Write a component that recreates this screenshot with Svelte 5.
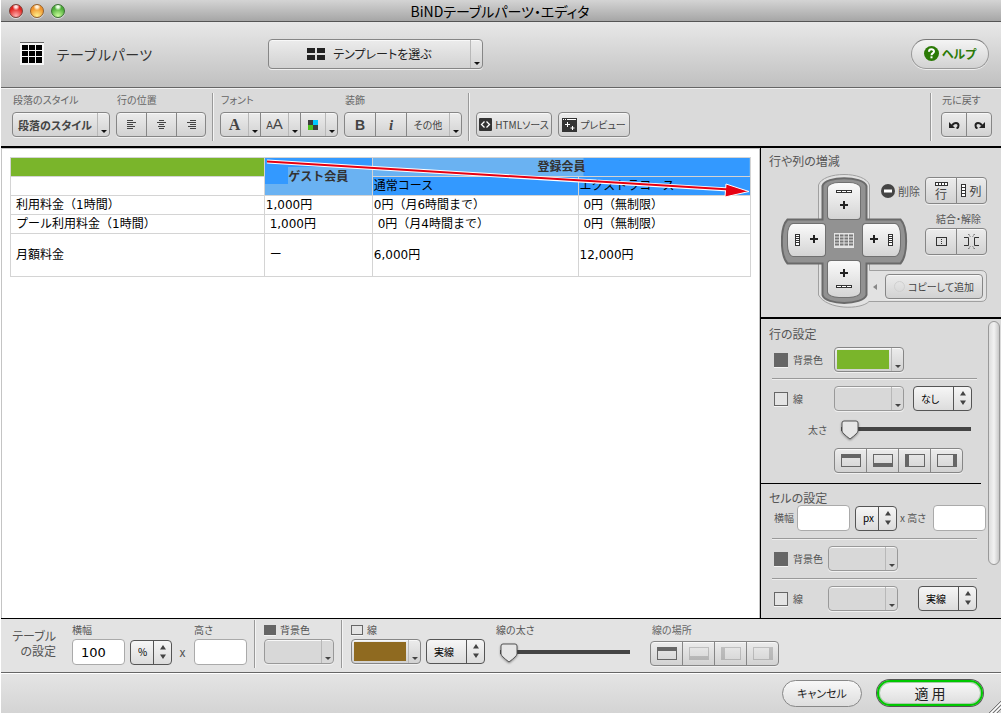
<script>
  let rowBg = $state(true);
  let rowLine = $state(false);
  let cellBg = $state(true);
  let cellLine = $state(false);
  let tableBg = $state(true);
  let tableLine = $state(false);
  let tableWidth = $state('100');
  let tableHeight = $state('');
  let cellWidth = $state('');
  let cellHeight = $state('');
  let rowThickness = $state(0);
  let tableThickness = $state(0);

  const edges = [
    { name: '上', x: 0, y: 0, w: 20, h: 4 },
    { name: '下', x: 0, y: 9, w: 20, h: 4 },
    { name: '左', x: 0, y: 0, w: 4, h: 13 },
    { name: '右', x: 16, y: 0, w: 4, h: 13 }
  ];
</script>

{#snippet swatch(label, color)}
  <button class="btn swatch" class:empty={!color} aria-label={label}>
    <span class="chip" style:background={color}></span><span class="drop"></span>
  </button>
{/snippet}

{#snippet picker(label, options, wide)}
  <span class="picker" class:wide>
    <select aria-label={label}>
      {#each options as o}<option>{o}</option>{/each}
    </select>
    <svg width="6" height="14" viewBox="0 0 6 14"><path d="M3 0L6 4.500H0zM3 14L0 9.500H6z" fill="#444" /></svg>
  </span>
{/snippet}

{#snippet edgeGroup(dimmed)}
  <div class="seg edges">
    {#each edges as e, i}
      <button class="btn" class:dim={dimmed && i > 0} aria-label={e.name}>
        <svg width="20" height="13" viewBox="0 0 20 13" fill="#666">
          <rect x="0.5" y="0.5" width="19" height="12" fill="none" stroke="#666" />
          <rect x={e.x} y={e.y} width={e.w} height={e.h} />
        </svg>
      </button>
    {/each}
  </div>
{/snippet}

<div class="window">
  <header class="titlebar">
    <div class="lights">
      <button class="light red" aria-label="閉じる"></button>
      <button class="light amber" aria-label="しまう"></button>
      <button class="light green" aria-label="拡大"></button>
    </div>
    <h1>BiNDテーブルパーツ・エディタ</h1>
  </header>

  <div class="banner">
    <div class="brand">
      <svg width="24" height="23" viewBox="0 0 24 23">
        <rect width="24" height="23" fill="#f6f6f6" />
        <path d="M0 .5H24" stroke="#666" />
        <path fill="#000" d="M2 3h6v5H2zM9 3h6v5H9zM16 3h6v5h-6zM2 9h6v5H2zM9 9h6v5H9zM16 9h6v5h-6zM2 15h6v6H2zM9 15h6v6H9zM16 15h6v6h-6z" />
      </svg>
      <span>テーブルパーツ</span>
    </div>
    <button class="btn template">
      <span class="face">
        <svg width="18" height="12" viewBox="0 0 18 12"><path fill="#222" d="M0 0h8v5H0zM10 0h8v5h-8zM0 7h8v5H0zM10 7h8v5h-8z" /></svg>
        テンプレートを選ぶ
      </span>
      <span class="drop"></span>
    </button>
    <button class="help">
      <svg width="15" height="15" viewBox="0 0 15 15">
        <circle cx="7.500" cy="7.500" r="7.500" fill="#2b7a06" />
        <path d="M5 5.700C5 2.500 10 2.600 10 5.500C10 7.200 7.500 7 7.500 9.200" fill="none" stroke="#fff" stroke-width="2" />
        <rect x="6.500" y="10.300" width="2" height="2" fill="#fff" />
      </svg>
      ヘルプ
    </button>
  </div>

  <div class="toolbar">
    <div class="group">
      <span class="cap">段落のスタイル</span>
      <button class="btn para"><span class="face">段落のスタイル</span><span class="drop"></span></button>
    </div>
    <div class="group">
      <span class="cap">行の位置</span>
      <div class="seg align">
        <button class="btn" aria-label="左揃え"><svg width="9" height="9" viewBox="0 0 9 9"><path d="M0 .5h6M0 2.500h9M0 4.500h6M0 6.500h8M0 8.500h6" stroke="#444" /></svg></button>
        <button class="btn" aria-label="中央揃え"><svg width="9" height="9" viewBox="0 0 9 9"><path d="M2 .5h5M0 2.500h9M2 4.500h5M1 6.500h7M2 8.500h5" stroke="#444" /></svg></button>
        <button class="btn" aria-label="右揃え"><svg width="9" height="9" viewBox="0 0 9 9"><path d="M3 .5h6M0 2.500h9M3 4.500h6M1 6.500h8M3 8.500h6" stroke="#444" /></svg></button>
      </div>
    </div>
    <span class="rule"></span>
    <div class="group">
      <span class="cap">フォント</span>
      <div class="seg font">
        <button class="btn"><span class="face serif">A</span><span class="drop"></span></button>
        <button class="btn"><span class="face sizes"><small>A</small>A</span><span class="drop"></span></button>
        <button class="btn" aria-label="文字色">
          <span class="face"><svg width="10" height="10" viewBox="0 0 10 10"><path fill="#3c3c3c" d="M0 0h5v5H0zM5 5h5v5H5z" /><path fill="#00c8ff" d="M5 0h5v5H5z" /><path fill="#4cc01c" d="M0 5h5v5H0z" /></svg></span>
          <span class="drop"></span>
        </button>
      </div>
    </div>
    <div class="group">
      <span class="cap">装飾</span>
      <div class="seg deco">
        <button class="btn bold">B</button>
        <button class="btn ital">i</button>
        <button class="btn more"><span class="face">その他</span><span class="drop"></span></button>
      </div>
    </div>
    <span class="rule"></span>
    <button class="btn tool">
      <svg width="13" height="13" viewBox="0 0 13 13"><rect width="13" height="13" rx="1" fill="#333" /><path d="M5.500 3.500L2.500 6.500L5.500 9.500M7.500 3.500L10.500 6.500L7.500 9.500" fill="none" stroke="#fff" stroke-width="1.300" /></svg>
      HTMLソース
    </button>
    <button class="btn tool preview">
      <svg width="15" height="14" viewBox="0 0 15 14"><rect width="15" height="14" fill="#333" /><path d="M1 1.500h1M3 1.500h1M5 1.500h9M5.500 4v5M3 6.500h5M10.500 8v4M8.500 10h4" stroke="#fff" /></svg>
      プレビュー
    </button>
    <span class="rule last"></span>
    <div class="group">
      <span class="cap">元に戻す</span>
      <div class="seg undo">
        <button class="btn" aria-label="元に戻す"><svg width="11" height="8" viewBox="0 0 11 8"><path d="M3 4.500C5 1 9.500 1 9.500 4.500C9.500 6 9 7 7.500 7.300" fill="none" stroke="#222" stroke-width="2" /><path d="M0 1v6h6z" fill="#222" /></svg></button>
        <button class="btn" aria-label="やり直す"><svg width="11" height="8" viewBox="0 0 11 8"><path d="M8 4.500C6 1 1.500 1 1.500 4.500C1.500 6 2 7 3.500 7.300" fill="none" stroke="#222" stroke-width="2" /><path d="M11 1v6H5z" fill="#222" /></svg></button>
      </div>
    </div>
  </div>

  <main>
    <section class="editor">
      <div class="sheet">
        <table>
          <colgroup><col class="c1" /><col class="c2" /><col class="c3" /><col class="c4" /></colgroup>
          <tbody>
            <tr><td class="lime"></td><th rowspan="2" class="guest">ゲスト会員</th><th colspan="2" class="member">登録会員</th></tr>
            <tr><td></td><td class="picked">通常コース</td><td class="picked">エクストラコース</td></tr>
            <tr><td>利用料金（1時間）</td><td>1,000円</td><td>0円（月6時間まで）</td><td>&nbsp;0円（無制限）</td></tr>
            <tr><td>プール利用料金（1時間）</td><td>&nbsp;1,000円</td><td>&nbsp;0円（月4時間まで）</td><td>&nbsp;0円（無制限）</td></tr>
            <tr class="tall"><td>月額料金</td><td>&nbsp;ー</td><td>6,000円</td><td>12,000円</td></tr>
          </tbody>
        </table>
        <svg class="arrow" width="490" height="42" viewBox="0 0 490 42">
          <path d="M5 4.500L466 32.500" stroke="#fff" stroke-width="4" />
          <path d="M464 27L487 34.500L463 40z" fill="#e60012" stroke="#fff" />
          <path d="M5 4.500L468 32.500" stroke="#e60012" stroke-width="2" />
        </svg>
      </div>
    </section>

    <aside>
      <section class="grow">
        <h2>行や列の増減</h2>
        <div class="ops">
          <div class="pad">
            <svg class="frame" width="207" height="136" viewBox="0 0 207 136">
              <path d="M37.500 60V12C42 -2 84 -2 88.500 12V97.500H200Q205.500 97.500 205.500 103V123Q205.500 128.500 200 128.500H88C80 137 46 137 37.500 122Z" fill="#e2e2e2" stroke="#a0a0a0" />
              <path d="M41.500 46.500V13C44 2.500 82 2.500 85.500 13V46.500H119.500C127 54 127 82 119.500 90.500H85.500V122C82 132.500 44 132.500 41.500 122V90.500H6.500C-1 82 -1 54 6.500 46.500Z" fill="#929292" stroke="#6a6a6a" stroke-width="2" />
            </svg>
            <button class="key up" aria-label="上に行を追加"><svg width="16" height="22" viewBox="0 0 16 22"><rect x=".5" y=".5" width="15" height="2" fill="#fff" stroke="#333" /><path d="M5.500 0v3M10.500 0v3" stroke="#333" /><path d="M8 11v8M4 15h8" stroke="#222" stroke-width="2" /></svg></button>
            <button class="key left" aria-label="左に列を追加"><svg width="23" height="12" viewBox="0 0 23 12"><rect x=".5" y=".5" width="4" height="11" fill="#fff" stroke="#333" /><path d="M0 2.500h5M0 4.500h5M0 6.500h5M0 8.500h5" stroke="#333" /><path d="M19 1v8M15 5h8" stroke="#222" stroke-width="2" /></svg></button>
            <svg class="mid" width="20" height="15" viewBox="0 0 20 15"><rect width="20" height="15" fill="#e5e5e5" /><path d="M1 2.500h18M1 5.500h18M1 8.500h18M1 11.500h18" stroke="#777" stroke-width="2" /><path d="M5.500 0v15M10 0v15M14.500 0v15" stroke="#e5e5e5" /></svg>
            <button class="key right" aria-label="右に列を追加"><svg width="23" height="12" viewBox="0 0 23 12"><rect x="18.500" y=".5" width="4" height="11" fill="#fff" stroke="#333" /><path d="M18 2.500h5M18 4.500h5M18 6.500h5M18 8.500h5" stroke="#333" /><path d="M4 1v8M0 5h8" stroke="#222" stroke-width="2" /></svg></button>
            <button class="key down" aria-label="下に行を追加"><svg width="16" height="22" viewBox="0 0 16 22"><rect x=".5" y="17.500" width="15" height="2" fill="#fff" stroke="#333" /><path d="M5.500 17v3M10.500 17v3" stroke="#333" /><path d="M8 1v8M4 5h8" stroke="#222" stroke-width="2" /></svg></button>
          </div>
          <div class="side">
            <div class="del">
              <svg width="14" height="14" viewBox="0 0 14 14"><circle cx="7" cy="7" r="7" fill="#444" /><rect x="3" y="5.500" width="8" height="3" fill="#fff" /></svg>
              <span>削除</span>
              <div class="seg pair">
                <button class="btn stack"><svg width="13" height="4" viewBox="0 0 13 4"><rect x=".5" y=".5" width="12" height="3" fill="#fff" stroke="#333" /><path d="M3.500 0v4M6.500 0v4M9.500 0v4" stroke="#333" /></svg>行</button>
                <button class="btn"><svg width="5" height="13" viewBox="0 0 5 13"><rect x=".5" y=".5" width="4" height="12" fill="#fff" stroke="#333" /><path d="M0 3.500h5M0 6.500h5M0 9.500h5" stroke="#333" /></svg>列</button>
              </div>
            </div>
            <span class="merge">結合・解除</span>
            <div class="seg pair">
              <button class="btn" aria-label="結合"><svg width="11" height="9" viewBox="0 0 11 9"><rect x=".5" y=".5" width="10" height="8" fill="none" stroke="#333" /><path d="M5.500 2v1M5.500 4v1M5.500 6v1" stroke="#333" /></svg></button>
              <button class="btn" aria-label="解除"><svg width="15" height="15" viewBox="0 0 15 15"><path d="M0 3.500H4.500V11.500H0M15 3.500H10.500V11.500H15" fill="none" stroke="#333" /><path d="M4.500 0l2 3M10.500 0l-2 3M4.500 15l2-3M10.500 15l-2-3" stroke="#333" stroke-dasharray="1 1" /></svg></button>
            </div>
            <div class="copy">
              <svg width="4" height="6" viewBox="0 0 4 6"><path d="M4 0v6L0 3z" fill="#888" /></svg>
              <button class="btn"><i></i>コピーして追加</button>
            </div>
          </div>
        </div>
      </section>

      <div class="scroller">
        <div class="forms">
          <section class="rows">
            <h2>行の設定</h2>
            <div class="line">
              <label><input type="checkbox" bind:checked={rowBg} />背景色</label>
              {@render swatch('行の背景色', '#7ab52b')}
            </div>
            <hr />
            <div class="line">
              <label><input type="checkbox" bind:checked={rowLine} />線</label>
              {@render swatch('行の線の色', '')}
              {@render picker('行の線の種類', ['なし', '実線', '点線'], true)}
            </div>
            <div class="line thick">
              <label for="row-thick">太さ</label>
              <input id="row-thick" type="range" min="0" max="20" bind:value={rowThickness} />
            </div>
            <div class="line place">{@render edgeGroup(false)}</div>
          </section>
          <section class="cells">
            <h2>セルの設定</h2>
            <div class="line dims">
              <label for="cell-w">横幅</label>
              <input id="cell-w" type="text" bind:value={cellWidth} />
              {@render picker('セルの単位', ['px', '%'], false)}
              <label for="cell-h">x 高さ</label>
              <input id="cell-h" type="text" bind:value={cellHeight} />
            </div>
            <hr />
            <div class="line">
              <label><input type="checkbox" bind:checked={cellBg} />背景色</label>
              {@render swatch('セルの背景色', '')}
            </div>
            <hr />
            <div class="line spread">
              <label><input type="checkbox" bind:checked={cellLine} />線</label>
              {@render swatch('セルの線の色', '')}
              {@render picker('セルの線の種類', ['実線', '点線', 'なし'], true)}
            </div>
          </section>
        </div>
        <div class="track"><div class="thumb"></div></div>
      </div>
    </aside>
  </main>

  <div class="settings">
    <h2>テーブル<br />の設定</h2>
    <div class="field">
      <label for="table-w">横幅</label>
      <div class="inline">
        <input id="table-w" type="text" bind:value={tableWidth} />
        {@render picker('表の単位', ['%', 'px'], false)}
        <span class="times">x</span>
      </div>
    </div>
    <div class="field">
      <label for="table-h">高さ</label>
      <input id="table-h" type="text" bind:value={tableHeight} />
    </div>
    <span class="rule"></span>
    <div class="field">
      <label><input type="checkbox" bind:checked={tableBg} />背景色</label>
      {@render swatch('表の背景色', '')}
    </div>
    <span class="rule"></span>
    <div class="field">
      <label><input type="checkbox" bind:checked={tableLine} />線</label>
      <div class="inline">
        {@render swatch('表の線の色', '#8f6a20')}
        {@render picker('表の線の種類', ['実線', '点線', 'なし'], true)}
      </div>
    </div>
    <div class="field slide">
      <label for="table-thick">線の太さ</label>
      <input id="table-thick" type="range" min="0" max="20" bind:value={tableThickness} />
    </div>
    <div class="field where">
      <span class="cap">線の場所</span>
      {@render edgeGroup(true)}
    </div>
  </div>

  <footer>
    <button class="pill">キャンセル</button>
    <button class="pill apply">適 用</button>
    <svg class="grip" width="12" height="12" viewBox="0 0 12 12"><path d="M0 12L12 0M4 12L12 4M8 12L12 8" stroke="#777" /><path d="M1 13L13 1M5 13L13 5" stroke="#fff" /></svg>
  </footer>
</div>

<style>
  :global(body) {
    background: #fff;
  }
  .window,
  .window * {
    box-sizing: border-box;
  }
  .window {
    display: flex;
    flex-direction: column;
    min-height: 100vh;
    padding-left: 1px;
    color: #555;
    font: 10px/14px 'Noto Sans CJK JP', sans-serif;
    font-feature-settings: 'palt';
  }
  button,
  input,
  select {
    margin: 0;
    font: inherit;
    font-feature-settings: inherit;
    color: inherit;
  }
  svg {
    display: block;
    flex: none;
  }
  h1,
  h2 {
    margin: 0;
    font-size: 12px;
    font-weight: 400;
  }

  .titlebar {
    display: flex;
    align-items: center;
    height: 22px;
    padding: 0 8px;
    background: linear-gradient(#d4d4d4, #a6a6a6);
    border-bottom: 1px solid #555;
  }
  .titlebar h1 {
    flex: 1;
    text-align: center;
    margin-right: 60px;
    color: #000;
    font-size: 14px;
  }
  .lights {
    display: flex;
    gap: 7px;
    width: 58px;
  }
  .light {
    width: 14px;
    height: 14px;
    padding: 0;
    border: 1px solid #7a4038;
    border-radius: 50%;
    box-shadow: 0 1px 0 #ddd;
  }
  .red {
    background: radial-gradient(circle at 50% 15%, #ffe0e0 0 10%, transparent 30%), radial-gradient(circle at 50% 90%, #ffb0b0, #e0201c 65%);
  }
  .amber {
    border-color: #94602a;
    background: radial-gradient(circle at 50% 15%, #fff2dc 0 10%, transparent 30%), radial-gradient(circle at 50% 90%, #fff08c, #f0942c 65%);
  }
  .green {
    border-color: #3c7034;
    background: radial-gradient(circle at 50% 15%, #ecffe4 0 10%, transparent 30%), radial-gradient(circle at 50% 90%, #ccff9c, #4cac38 65%);
  }

  .banner {
    display: flex;
    align-items: center;
    height: 66px;
    padding: 0 12px 2px 19px;
    background: linear-gradient(#e8e8e8, #c0c0c0);
    border-bottom: 1px solid #666;
  }
  .brand {
    display: flex;
    align-items: center;
    gap: 12px;
    width: 248px;
    color: #333;
    font-size: 14px;
    font-feature-settings: normal;
  }

  .btn {
    display: flex;
    align-items: center;
    justify-content: center;
    height: 25px;
    padding: 0;
    border: 1px solid #868686;
    border-radius: 4px;
    background: linear-gradient(#ececec, #d2d2d2);
    box-shadow: inset 0 1px 0 #f8f8f8, 0 1px 0 #f0f0f0;
    color: #444;
    white-space: nowrap;
  }
  .face {
    display: flex;
    flex: 1;
    align-items: center;
    justify-content: center;
  }
  .drop {
    display: flex;
    flex: none;
    align-items: flex-end;
    justify-content: center;
    align-self: stretch;
    width: 12px;
    padding-bottom: 3px;
    border-left: 1px solid #b8b8b8;
  }
  .drop::after {
    content: '';
    border: solid transparent;
    border-width: 3px 3px 0;
    border-top-color: #111;
  }
  .template {
    width: 215px;
    height: 30px;
    font-size: 12px;
    color: #222;
  }
  .template .face {
    gap: 8px;
  }
  .help {
    display: flex;
    align-items: center;
    justify-content: center;
    gap: 3px;
    width: 78px;
    height: 30px;
    margin-left: auto;
    padding: 0;
    border: 1px solid #999;
    border-top-color: #777;
    border-radius: 15px;
    background: linear-gradient(#f4f4f4, #d2d2d2);
    box-shadow: 0 1px 0 #eee;
    color: #2b7a06;
    font-size: 12px;
    font-weight: 700;
  }

  .toolbar {
    display: flex;
    align-items: flex-end;
    height: 60px;
    padding: 0 9px 9px 11px;
    background: #dadada;
    border-top: 1px solid #f2f2f2;
    border-bottom: 2px solid #000;
  }
  .group {
    display: flex;
    flex-direction: column;
    gap: 5px;
    margin-right: 6px;
  }
  .group:last-child {
    margin-right: 0;
  }
  .cap {
    padding-left: 1px;
    color: #666;
    white-space: nowrap;
  }
  .rule {
    flex: none;
    align-self: flex-end;
    width: 2px;
    height: 48px;
    margin: 0 6px -4px 0;
    border-left: 1px solid #999;
    background: #f4f4f4;
  }
  .rule.last {
    margin-left: auto;
    margin-right: 9px;
  }
  .seg {
    display: flex;
  }
  .seg .btn {
    border-radius: 0;
    margin-left: -1px;
  }
  .seg .btn:first-child {
    margin-left: 0;
    border-radius: 4px 0 0 4px;
  }
  .seg .btn:last-child {
    border-radius: 0 4px 4px 0;
  }
  .para {
    width: 98px;
    font-size: 11px;
    font-weight: 700;
  }
  .align .btn {
    width: 31px;
    padding-bottom: 1px;
  }
  .align .btn:last-child {
    width: 30px;
  }
  .font .btn {
    width: 41px;
  }
  .font .btn:last-child {
    width: 38px;
  }
  .serif {
    font: 700 16px/20px 'Liberation Serif', serif;
  }
  .sizes {
    align-items: baseline;
    font: 15px/20px 'Liberation Sans', sans-serif;
  }
  .sizes small {
    font-size: 10px;
  }
  .bold {
    width: 32px;
    font: 700 14px/20px 'Liberation Sans', sans-serif;
  }
  .ital {
    width: 32px;
    font: italic 700 15px/20px 'Liberation Serif', serif;
  }
  .more {
    width: 56px;
  }
  .tool {
    gap: 3px;
    width: 76px;
    margin-right: 6px;
  }
  .preview {
    width: 72px;
  }
  .undo .btn {
    width: 26px;
  }

  main {
    display: flex;
    flex: 1;
  }
  .editor {
    flex: 1;
    min-width: 0;
    padding: 8px;
    border: 1px solid #c4c4c4;
    border-width: 1px 1px 0 1px;
    background: #fff;
  }
  .sheet {
    position: relative;
  }
  .arrow {
    position: absolute;
    left: 34%;
    top: 0;
  }
  table {
    width: 100%;
    border-collapse: collapse;
    table-layout: fixed;
    color: #000;
    font: 12px/18px 'DejaVu Sans', 'Noto Sans CJK JP', sans-serif;
    font-feature-settings: normal;
  }
  .c1 {
    width: 34.3%;
  }
  .c2 {
    width: 14.6%;
  }
  .c3 {
    width: 27.8%;
  }
  td,
  th {
    height: 19px;
    padding: 0 1px;
    border: 1px solid #d4d4d4;
    white-space: nowrap;
  }
  td:first-child {
    padding-left: 5px;
  }
  th {
    color: #333;
  }
  .tall td {
    height: 43px;
  }
  .lime {
    background: #7ab52b;
  }
  .guest {
    background: linear-gradient(#3399ff, #3399ff) 0 0 / 100% 9px no-repeat, linear-gradient(#3399ff, #3399ff) 0 0 / 23px 26px no-repeat, #6ab2f2;
  }
  .member {
    background: linear-gradient(90deg, #6ab2f2 56%, #3399ff 56%);
  }
  .picked {
    background: #3399ff;
  }

  aside {
    display: flex;
    flex-direction: column;
    width: 241px;
    border-left: 1px solid #000;
    background: #dadada;
  }
  .grow {
    height: 171px;
    padding: 6px 12px 0 8px;
    border-bottom: 2px solid #000;
  }
  .ops {
    display: flex;
    justify-content: space-between;
    margin: 5px 0 0 12px;
  }
  .pad {
    position: relative;
    display: grid;
    grid-template: 38px 34px 38px / 39px 34px 39px;
    gap: 3px 1px;
    place-items: center;
    width: 126px;
    height: 134px;
    padding: 9px 6px;
  }
  .frame {
    position: absolute;
    left: 0;
    top: 0;
  }
  .key {
    position: relative;
    display: grid;
    place-items: center;
    width: 100%;
    height: 100%;
    padding: 0;
    border: 1px solid #707070;
    background: linear-gradient(#fafafa, #d4d4d4);
  }
  .mid {
    position: relative;
    grid-area: 2 / 2;
  }
  .up {
    grid-area: 1 / 2;
    border-radius: 12px 12px 4px 4px / 6px 6px 4px 4px;
  }
  .left {
    grid-area: 2 / 1;
    border-radius: 6px 4px 4px 6px / 12px 4px 4px 12px;
  }
  .right {
    grid-area: 2 / 3;
    border-radius: 4px 6px 6px 4px / 4px 12px 12px 4px;
  }
  .down {
    grid-area: 3 / 2;
    border-radius: 4px 4px 12px 12px / 4px 4px 6px 6px;
  }
  .side {
    position: relative;
    display: flex;
    flex-direction: column;
    align-items: flex-end;
    padding-top: 4px;
    margin: 0 2px 0 -36px;
  }
  .del {
    display: flex;
    align-items: center;
    gap: 3px;
    font-size: 11px;
  }
  .pair .btn {
    width: 32px;
    height: 27px;
    gap: 3px;
    font-size: 12px;
  }
  .pair .btn:last-child {
    width: 31px;
  }
  .del .pair {
    margin-left: 2px;
  }
  .stack {
    flex-direction: column;
    line-height: 13px;
  }
  .pair .stack {
    gap: 1px;
  }
  .merge {
    margin: 8px 6px 2px 0;
  }
  .copy {
    display: flex;
    align-items: center;
    gap: 8px;
    margin: 19px 4px 0 0;
  }
  .copy .btn {
    gap: 3px;
    width: 98px;
  }
  .copy i {
    width: 11px;
    height: 11px;
    border: 1px solid #d0d0d0;
    border-radius: 50%;
  }

  .scroller {
    display: flex;
    flex: 1;
  }
  .forms {
    flex: 1;
    min-width: 0;
  }
  .track {
    width: 13px;
    padding: 2px 1px 0 0;
  }
  .thumb {
    height: 244px;
    border: 1px solid #999;
    border-radius: 6px;
    background: linear-gradient(90deg, #ddd, #f2f2f2 50%, #c8c8c8);
  }
  .rows {
    height: 165px;
    margin-right: 7px;
    padding: 8px 0 0 8px;
    border-bottom: 1px solid #000;
  }
  .cells {
    padding: 7px 0 6px 8px;
  }
  .line {
    display: flex;
    align-items: center;
    padding-left: 5px;
  }
  .line label {
    display: flex;
    align-items: center;
    gap: 5px;
    width: 60px;
  }
  .rows h2 {
    margin-bottom: 6px;
  }
  .line .picker {
    margin-left: 9px;
  }
  .cells .line label {
    width: 54px;
  }
  .spread .picker {
    margin-left: 20px;
  }
  hr {
    height: 2px;
    margin: 6px 4px 6px 3px;
    border: 0;
    border-top: 1px solid #999;
    background: #eee;
  }
  .cells hr {
    margin: 7px 11px 6px 3px;
  }
  .line.thick {
    margin: 8px 0 7px;
  }
  .line.thick label {
    justify-content: flex-end;
    width: 53px;
    margin-right: 14px;
  }
  .line.place {
    padding-left: 65px;
  }
  .cells .line.dims label {
    width: auto;
    margin-right: 3px;
    white-space: nowrap;
  }
  .dims .picker {
    margin: 0 3px 0 5px;
  }
  .cells .line.dims .picker + label {
    margin-right: 7px;
  }
  input[type='checkbox'] {
    appearance: none;
    flex: none;
    width: 14px;
    height: 14px;
    border: 1px solid #666;
    background: #e4e4e4;
    box-shadow: 0 1px 0 #f4f4f4;
  }
  input[type='checkbox']:checked {
    background: #666;
  }
  input[type='text'] {
    flex: none;
    width: 53px;
    height: 26px;
    padding: 0 8px;
    border: 1px solid #aaa;
    border-radius: 4px;
    background: #fff;
    color: #000;
    font: 13px/16px 'DejaVu Sans', sans-serif;
  }
  .swatch {
    flex: none;
    width: 70px;
    padding-left: 2px;
  }
  .chip {
    flex: 1;
    height: 19px;
    margin-right: 2px;
  }
  .empty {
    background: #d8d8d8;
    border-color: #999;
  }
  .swatch .drop::after {
    border-top-color: #444;
  }
  .picker {
    position: relative;
    display: block;
    flex: none;
    width: 42px;
    height: 25px;
  }
  .picker.wide {
    width: 59px;
  }
  .picker select {
    appearance: none;
    width: 100%;
    height: 100%;
    padding: 0 18px 0 7px;
    border: 1px solid #555;
    border-radius: 4px;
    background: linear-gradient(#555, #555) right 17px top 0 / 1px 100% no-repeat, linear-gradient(#f6f6f6, #dcdcdc);
    color: #000;
  }
  .picker svg {
    position: absolute;
    right: 6px;
    top: 5px;
    pointer-events: none;
  }
  input[type='range'] {
    appearance: none;
    width: 130px;
    height: 22px;
    background: linear-gradient(#444, #444) 0 8px / 100% 4px no-repeat;
  }
  input[type='range']::-webkit-slider-thumb {
    appearance: none;
    width: 18px;
    height: 21px;
    border: 0;
    background: url("data:image/svg+xml,%3Csvg xmlns='http://www.w3.org/2000/svg' width='18' height='21'%3E%3Cpath d='M3 1H15Q17 1 17 3V11Q17 13 9 19Q1 13 1 11V3Q1 1 3 1Z' fill='%23e6e6e6' stroke='%23555'/%3E%3C/svg%3E") no-repeat;
    filter: drop-shadow(0 1px 1px #0006);
  }
  .edges .btn {
    width: 33px;
  }
  .dim svg {
    opacity: 0.3;
  }

  .settings {
    display: flex;
    align-items: flex-start;
    height: 55px;
    padding: 4px 8px 0 9px;
    border-top: 1px solid #000;
    border-bottom: 1px solid #666;
    background: #e3e3e3;
  }
  .settings h2 {
    width: 46px;
    margin: 5px 16px 0 0;
    line-height: 15px;
    text-align: right;
    white-space: nowrap;
  }
  .field {
    display: flex;
    flex-direction: column;
    gap: 2px;
    margin-right: 6px;
  }
  .field label {
    display: flex;
    align-items: center;
    gap: 4px;
  }
  .field input[type='checkbox'] {
    width: 12px;
    height: 10px;
  }
  .inline {
    display: flex;
    align-items: center;
    gap: 5px;
  }
  .times {
    width: 11px;
    text-align: center;
    font-size: 12px;
  }
  .settings .rule {
    align-self: flex-start;
    height: 48px;
    margin: -3px 8px 0 1px;
  }
  .slide {
    gap: 5px;
    margin: 0 20px 0 9px;
  }
  .slide label,
  .where .cap {
    margin-left: -4px;
    padding-left: 0;
  }
  .where .cap {
    margin-left: 2px;
  }
  .where {
    gap: 4px;
  }

  footer {
    position: relative;
    display: flex;
    align-items: center;
    justify-content: flex-end;
    gap: 15px;
    height: 40px;
    padding: 0 18px 1px 8px;
    border-top: 1px solid #fff;
    background: linear-gradient(#e4e4e4, #d4d4d4);
  }
  .pill {
    width: 80px;
    height: 27px;
    padding: 0;
    border: 1px solid #888;
    border-radius: 14px;
    background: linear-gradient(#f8f8f8, #dedede);
    color: #222;
    font-size: 11px;
  }
  .apply {
    width: 106px;
    height: 26px;
    border: 2px solid #00c800;
    box-shadow: inset 0 0 0 1px #a8c8a8, 0 0 0 1px #555;
    font-size: 14px;
    line-height: 16px;
  }
  .grip {
    position: absolute;
    right: 0;
    bottom: 0;
  }
</style>
